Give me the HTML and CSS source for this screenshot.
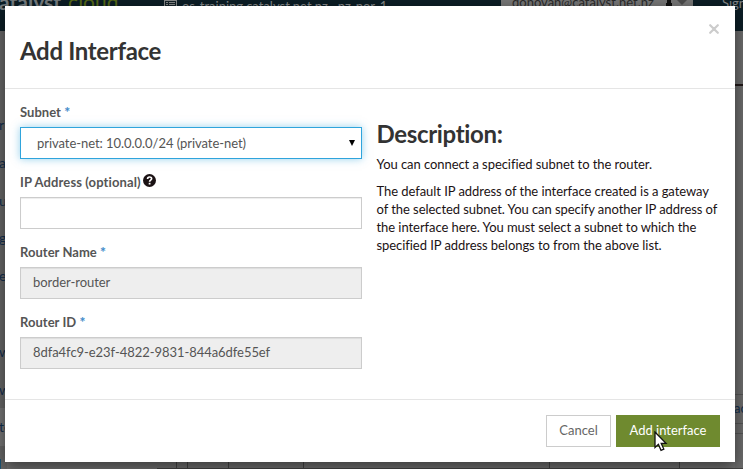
FILE: index.html
```html
<!DOCTYPE html>
<html lang="en">
<head>
<meta charset="utf-8">
<title>Add Interface</title>
<link rel="stylesheet" href="styles.css">
</head>
<body>
<div class="page">
  <header class="topbar">
    <div class="brand">atalyst<span>cloud</span></div>
    <svg class="project-icon" width="13" height="12" viewBox="0 0 13 12"><rect x=".5" y=".5" width="12" height="11" fill="#152329" stroke="#87898a"/><path d="M2 2.5h2M5 2.5h6M2 4.5h2M5 4.5h6" stroke="#87898a"/></svg>
    <div class="project">os-training.catalyst.net.nz · nz-por-1</div>
    <div class="user">donovan@catalyst.net.nz</div>
    <svg class="user-icon" width="27" height="12" viewBox="0 0 27 12"><path d="M0 0h27v12H0z" fill="#777"/><path d="M1 0h4v3h1v4H0V3h1z" fill="#111"/><path d="M11 0h10l-5 5z" fill="#4c4c4c"/></svg>
    <div class="signout">Sign</div>
  </header>
  <div class="workspace">
    <nav class="sidebar">
      <span>r</span><span>ar</span><span>un</span><span>ge</span><span>es</span><span></span><span>w</span><span>w</span><span class="current">te</span><i class="marker"></i>
    </nav>
    <aside class="rail"><div class="rule"></div><div class="cell">ac</div><div class="cell-end"></div></aside>
    <div class="grid"><i></i><i></i><i></i><i></i><i></i><i></i></div>
  </div>
</div>
<div class="modal" role="dialog">
  <header class="modal-header">
    <h3>Add Interface</h3>
    <svg class="close" width="10" height="10" viewBox="0 0 10 10"><path d="M1.2 1.2l7.6 7.6M8.8 1.2L1.2 8.8" stroke="#ccc" stroke-width="2.2" stroke-linecap="round"/></svg>
  </header>
  <div class="modal-body">
    <form class="fields">
      <div class="field"><label>Subnet <b>*</b></label><div class="control select"><span>private-net: 10.0.0.0/24 (private-net)</span><svg width="6" height="6" viewBox="0 0 6 6"><path d="M0 0h6L3 6z"/></svg></div></div>
      <div class="field"><label class="optional">IP Address (optional)<svg class="help" width="13" height="13" viewBox="0 0 13 13"><circle cx="6.5" cy="6.5" r="6.5" fill="#1b1214"/><path d="M4.6 5c0-2.7 4-2.5 4-.3 0 1.5-2 1.3-2 3" fill="none" stroke="#fff" stroke-width="1.7"/><path d="M5.7 8.8h1.8v1.7H5.7z" fill="#fff"/></svg></label><div class="control"></div></div>
      <div class="field"><label>Router Name <b>*</b></label><div class="control readonly">border-router</div></div>
      <div class="field"><label>Router ID <b>*</b></label><div class="control readonly">8dfa4fc9-e23f-4822-9831-844a6dfe55ef</div></div>
    </form>
    <section class="description">
      <h3>Description:</h3>
      <p>You can connect a specified subnet to the router.</p>
      <p>The default IP address of the interface created is a gateway<br>of the selected subnet. You can specify another IP address of<br>the interface here. You must select a subnet to which the<br>specified IP address belongs to from the above list.</p>
    </section>
  </div>
  <footer class="modal-footer"><div class="btn">Cancel</div><div class="btn primary">Add interface</div></footer>
</div>
<svg class="cursor" width="14" height="21" viewBox="0 0 14 21"><path d="M1 1v15.5l3.4-3.2 2.6 6 2.8-1.2-2.6-5.8H12z" fill="#fff" stroke="#111" stroke-width="1.3"/></svg>
</body>
</html>
```
FILE: styles.css
```css
* { box-sizing: border-box; }
body { margin: 0; width: 743px; height: 469px; overflow: hidden; font: 13px/18px Lato, sans-serif; color: #1b1214; }
h3, p { margin: 0; }
svg { display: block; flex: none; }
.page { height: 469px; background: #717171; overflow: hidden; }
.topbar { height: 31px; background: #0c1e26; display: flex; align-items: flex-start; overflow: hidden; white-space: nowrap; color: #85888a; }
.topbar > * { flex: none; }
.brand { width: 165px; font-size: 21px; font-weight: 700; line-height: 20px; margin-top: -8px; margin-left: -1px; color: #777d80; }
.brand span { margin-left: 7px; font-weight: 400; color: #566816; }
.project { width: 324px; padding-left: 5px; margin-top: -3px; }
.user { width: 165px; height: 12px; padding-left: 11px; background: #777; color: #2b2b2b; line-height: 5px; }
.signout { margin: -6px 0 0 29px; font-size: 13px; }
.workspace { position: relative; display: flex; justify-content: space-between; height: 438px; }
.sidebar { width: 7px; padding-top: 75px; background: #686868; color: #142f4e; font-size: 14px; }
.sidebar span { display: flex; width: 6px; height: 37.8px; line-height: 37px; text-indent: -1px; }
.sidebar .current { background: #777; }
.marker { display: block; width: 1px; height: 30px; margin-top: 13px; background: #1c5575; }
.rail { width: 8px; padding-top: 53px; background: #6c6c6c; }
.rule { height: 2px; margin-bottom: 308px; background: #211818; }
.cell { height: 30px; line-height: 27px; border: solid #555; border-width: 1px 0; color: #142f4e; text-indent: -1px; }
.cell-end { height: 10px; border-bottom: 1px solid #555; }
.grid { position: absolute; left: 157px; right: 0; bottom: 0; height: 8px; display: flex; border-bottom: 1px solid #444; }
.grid i { border-right: 1px solid #454545; width: 20px; }
.grid i:nth-child(2) { width: 11px; }
.grid i:nth-child(3) { width: 41px; }
.grid i:nth-child(4) { width: 75px; }
.grid i:nth-child(5) { width: 246px; }
.grid i:nth-child(6) { width: 130px; }
.modal { position: absolute; left: 5px; top: 6px; width: 730px; height: 456px; background: #fff; box-shadow: 0 5px 15px rgba(0,0,0,.5); display: flex; flex-direction: column; }
.modal-header { height: 83px; border-bottom: 1px solid #e5e5e5; padding: 18px 16px 0 15px; display: flex; justify-content: space-between; }
.modal h3 { font-size: 24px; line-height: 26px; letter-spacing: -.33px; color: #333; }
.modal-header h3 { margin-top: 14px; }
.modal-body { height: 310px; padding: 14px 15px; display: flex; gap: 14.5px; }
.fields { width: 342px; flex: none; letter-spacing: -.05px; }
.field { height: 70px; }
.field label { display: flex; height: 18px; margin-bottom: 6px; color: #555; font-weight: 700; white-space: pre; letter-spacing: .03px; }
.field .optional { letter-spacing: .11px; }
.field b { color: #428bca; font-size: 14px; }
.help { margin: 1px 0 0 2px; }
.control { height: 32px; border: 1px solid #ccc; padding: 0 12px; line-height: 29px; color: #555; box-shadow: inset 0 1px 1px rgba(0,0,0,.075); }
.select { display: flex; align-items: center; justify-content: space-between; border-color: #2fa4dc; padding: 0 6px 0 16px; box-shadow: 0 0 8px rgba(47,164,220,.5); }
.select svg { fill: #000; }
.readonly { background: #eee; }
.description h3 { margin: 18px 0 8px; }
.description p { margin-bottom: 9px; white-space: nowrap; letter-spacing: -.06px; }
.modal-footer { border-top: 1px solid #e5e5e5; padding: 15px; display: flex; justify-content: flex-end; gap: 5px; }
.btn { width: 65px; height: 32px; border: 1px solid #ccc; line-height: 29px; text-align: center; color: #666; }
.primary { width: 104px; background: #6f8a2f; border-color: #6f8a2f; color: #fff; }
.cursor { position: absolute; left: 654px; top: 431px; }
```
